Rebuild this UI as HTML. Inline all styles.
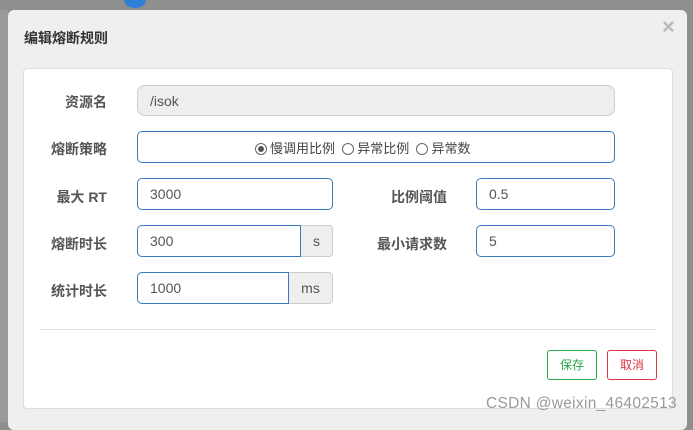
<!DOCTYPE html>
<html><head><meta charset="utf-8"><style>
*{box-sizing:border-box;margin:0;padding:0}
body{width:693px;height:422px;background:#8f8f8f;position:relative;overflow:hidden;font-family:"Liberation Sans","Noto Sans CJK SC",sans-serif;color:#555}
.a{position:absolute}
.modal{left:8px;top:10px;width:679px;height:420px;background:#efefef;border-radius:6px}
.title{left:24px;top:28px;font-size:14px;font-weight:bold;color:#333}
.x{left:662px;top:14px;font-size:22px;color:#bbb;font-weight:bold}
.panel{left:23px;top:68px;width:650px;height:341px;background:#fff;border:1px solid #ddd;border-radius:4px}
.lbl{font-size:14px;font-weight:bold;color:#555;text-align:right;width:90px}
.in{border:1px solid #3a7abf;border-radius:5px;background:#fff;font-size:14px;color:#555;padding-left:12px;line-height:31px}
.ad{background:#eee;border:1px solid #ccc;border-left:none;border-radius:0 4px 4px 0;font-size:14px;color:#555;text-align:center;line-height:31px}
.r{font-size:13px;color:#444;line-height:33px}
.rd{display:inline-block;width:12px;height:12px;border:1px solid #666;border-radius:50%;vertical-align:-2px;margin-right:3px;position:relative;background:#fff}
.rd.on:after{content:"";position:absolute;left:2px;top:2px;width:6px;height:6px;border-radius:50%;background:#555}
.btn{font-size:12px;text-align:center;line-height:28px;border-radius:3px;background:#fff}
</style></head><body>
<div class="a" style="left:0;top:10px;width:8px;height:412px;background:#999"></div>
<div class="a modal"></div>
<div class="a" style="left:124px;top:-8px;width:22px;height:16px;border-radius:50%;background:#2e7fd8"></div>
<div class="a title">编辑熔断规则</div>
<div class="a x">×</div>
<div class="a panel"></div>
<div class="a lbl" style="left:17px;top:92px">资源名</div>
<div class="a in" style="left:137px;top:85px;width:478px;height:31px;background:#eee;border-color:#ccc;border-radius:8px">/isok</div>
<div class="a lbl" style="left:17px;top:139px">熔断策略</div>
<div class="a in r" style="left:137px;top:131px;width:478px;height:32px;padding-left:117px"><span class="rd on"></span>慢调用比例 &nbsp;<span class="rd"></span>异常比例 &nbsp;<span class="rd"></span>异常数</div>
<div class="a lbl" style="left:17px;top:187px">最大 RT</div>
<div class="a in" style="left:137px;top:178px;width:196px;height:32px">3000</div>
<div class="a lbl" style="left:357px;top:187px">比例阈值</div>
<div class="a in" style="left:476px;top:178px;width:139px;height:32px">0.5</div>
<div class="a lbl" style="left:17px;top:234px">熔断时长</div>
<div class="a in" style="left:137px;top:225px;width:164px;height:32px;border-radius:5px 0 0 5px">300</div>
<div class="a ad" style="left:301px;top:225px;width:32px;height:32px">s</div>
<div class="a lbl" style="left:357px;top:234px">最小请求数</div>
<div class="a in" style="left:476px;top:225px;width:139px;height:32px">5</div>
<div class="a lbl" style="left:17px;top:281px">统计时长</div>
<div class="a in" style="left:137px;top:272px;width:152px;height:32px;border-radius:5px 0 0 5px">1000</div>
<div class="a ad" style="left:289px;top:272px;width:44px;height:32px">ms</div>
<div class="a" style="left:39px;top:329px;width:618px;height:1px;background:#e3e3e3"></div>
<div class="a btn" style="left:547px;top:350px;width:50px;height:30px;border:1px solid #28a745;color:#28a745">保存</div>
<div class="a btn" style="left:607px;top:350px;width:50px;height:30px;border:1px solid #dc3545;color:#dc3545">取消</div>
<div class="a" style="left:486px;top:395px;font-size:15.5px;color:#999;letter-spacing:0.3px">CSDN @weixin_46402513</div>
</body></html>
